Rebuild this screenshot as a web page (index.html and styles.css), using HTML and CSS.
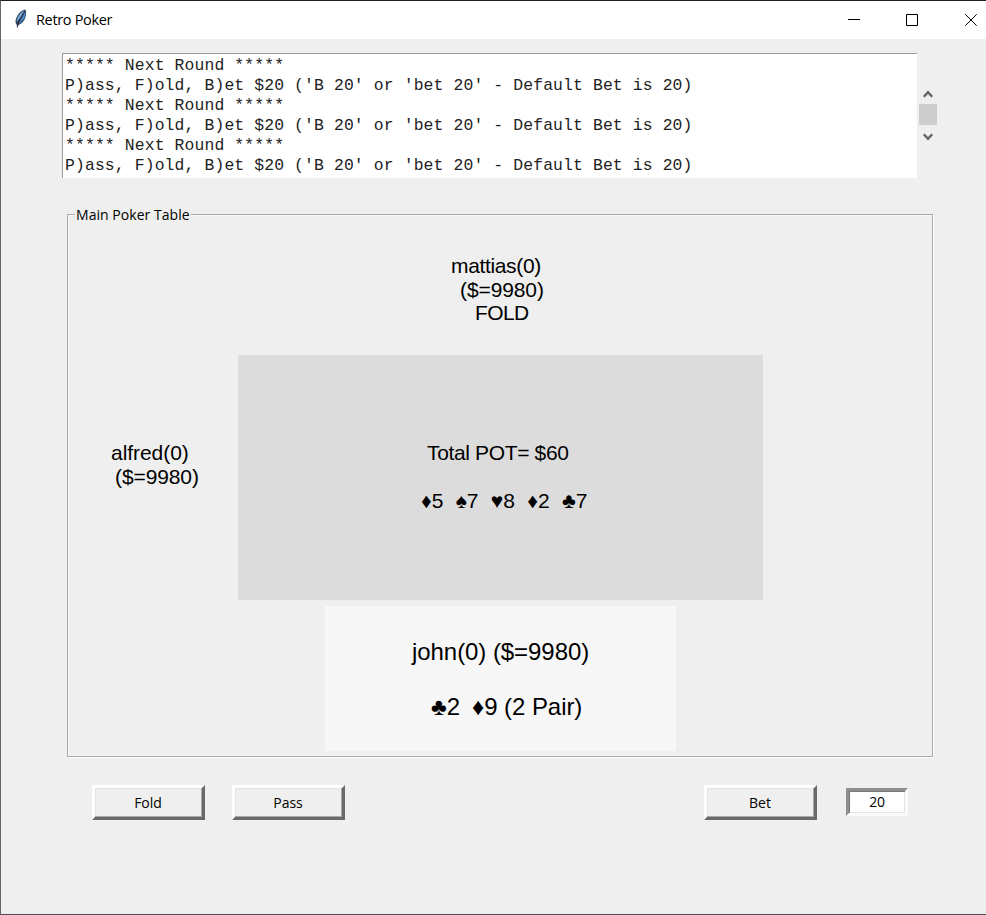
FILE: index.html
```html
<!DOCTYPE html>
<html lang="en">
<head>
<meta charset="utf-8">
<title>Retro Poker</title>
<link rel="stylesheet" href="styles.css">
</head>
<body>
<div class="window">
  <header class="titlebar">
    <svg class="feather" width="14" height="20" viewBox="0 0 14 20">
      <path d="M11.2 0.6C12.8 2.6 12.4 7.4 10.2 11.2C8.6 13.8 6.4 15.3 4.4 16L3.4 19L2.6 15.6C.8 13.6 1.4 9.6 4.2 5.6C6.2 2.7 9 .8 11.2.6Z" fill="#33475f"/>
      <path d="M10.2 1.6C7 3.2 3.2 7.6 2.6 12.6C5.4 10.6 8.4 6 10.2 1.6Z" fill="#7fb0e0"/>
      <path d="M11.2 2.6C12.2 7 9.4 12 5 14.8C6.8 11 9.4 7 11.2 2.6Z" fill="#4f8ad0"/>
      <path d="M10.4 2.6C7 7.4 4.2 12 3.2 18.6" stroke="#1c2836" stroke-width=".7" fill="none"/>
    </svg>
    <span class="title">Retro Poker</span>
    <div class="controls">
      <svg width="12" height="12" viewBox="0 0 12 12"><path d="M0 5.5H12"/></svg>
      <svg width="12" height="12" viewBox="0 0 12 12"><path d="M.5.5H11.5V11.5H.5Z"/></svg>
      <svg class="close" width="12" height="12" viewBox="0 0 12 12"><path d="M.3.3L11.7 11.7M11.7.3L.3 11.7"/></svg>
    </div>
  </header>

  <section class="log-row">
    <pre class="log">***** Next Round *****
P)ass, F)old, B)et $20 ('B 20' or 'bet 20' - Default Bet is 20)
***** Next Round *****
P)ass, F)old, B)et $20 ('B 20' or 'bet 20' - Default Bet is 20)
***** Next Round *****
P)ass, F)old, B)et $20 ('B 20' or 'bet 20' - Default Bet is 20)</pre>
    <div class="scrollbar">
      <svg width="10" height="8" viewBox="0 0 10 8"><path d="M.8 6.8L5 2.2L9.2 6.8"/></svg>
      <div class="thumb"></div>
      <svg width="10" height="8" viewBox="0 0 10 8"><path d="M.8 1.2L5 5.8L9.2 1.2"/></svg>
    </div>
  </section>

  <section class="table">
    <h2 class="legend"><span class="legend-text">Main Poker Table</span></h2>
    <div class="north">
      <div class="seat-name">mattias(0)</div>
      <div class="seat-cash">($=9980)</div>
      <div class="seat-state">FOLD</div>
    </div>
    <div class="middle">
      <div class="west">
        <div class="west-name">alfred(0)</div>
        <div class="west-cash">($=9980)</div>
      </div>
      <div class="pot">
        <div class="total">Total POT= $60</div>
        <div class="board"><span>♦5</span><span>♠7</span><span>♥8</span><span>♦2</span><span>♣7</span></div>
      </div>
    </div>
    <div class="south">
      <div class="south-name">john(0) ($=9980)</div>
      <div class="hand"><span>♣2</span><span>♦9 (2 Pair)</span></div>
    </div>
  </section>

  <footer class="actions">
    <button class="btn">Fold</button>
    <button class="btn">Pass</button>
    <button class="btn bet">Bet</button>
    <input class="amount" value="20" aria-label="Bet amount">
  </footer>
</div>
</body>
</html>
```
FILE: styles.css
```css
* { box-sizing: border-box; }
body { margin: 0; background: #efefef; color: #000; overflow: hidden; }

.window {
  width: 986px;
  height: 915px;
  background: #efefef;
  border-top: 1px solid #1a1c26;
  border-left: 1px solid #666;
  border-bottom: 1px solid #4a4f55;
  font: 14px/20px "Open Sans", "Noto Sans", sans-serif;
}

.titlebar {
  display: flex;
  align-items: center;
  height: 38px;
  padding: 0 9px 0 13px;
  background: #fff;
}
.feather { margin-right: 8px; margin-top: -3px; }
.title { font-size: 14.5px; letter-spacing: -0.33px; }
.controls { display: flex; gap: 46px; margin-left: auto; }
.controls svg { stroke: #000; stroke-width: 1; fill: none; }
.controls .close { margin-left: 1px; }

.log-row { display: flex; align-items: flex-start; padding: 14px 0 0 61px; }
.log {
  width: 855px;
  height: 125px;
  margin: 0;
  padding: 2px 0 0 2px;
  background: #fff;
  border-top: 1px solid #9c9c9c;
  border-left: 1px solid #9c9c9c;
  color: #222;
  font: 16.4px/20px "Liberation Mono", monospace;
  letter-spacing: 0.125px;
  overflow: hidden;
}
.scrollbar {
  display: flex;
  flex-direction: column;
  align-items: center;
  gap: 6px;
  width: 18px;
  margin: 37px 0 0 2px;
}
.scrollbar svg { stroke: #606060; stroke-width: 2.3; fill: none; }
.scrollbar svg:last-child { margin-top: 2px; }
.thumb { width: 18px; height: 21px; background: #cdcdcd; }

.table {
  width: 866px;
  height: 543px;
  margin: 36px 0 0 66px;
  border: 1px solid #a9a9a9;
  box-shadow: 1px 1px 0 #fff, inset 1px 1px 0 #fafafa;
  font: 21px/24px "Liberation Sans", Arial, sans-serif;
  letter-spacing: -0.35px;
}
.legend {
  width: max-content;
  height: 20px;
  margin: -10px 0 0 7px;
  padding: 0 1px;
  background: #efefef;
  font: 14px/20px "Open Sans", sans-serif;
}
.legend-text { letter-spacing: 0.04px; }
.north { width: 92px; height: 101px; margin: 29px 0 0 383px; white-space: nowrap; }
.seat-cash { padding-left: 9px; letter-spacing: -0.1px; }
.seat-state { padding-left: 24px; margin-top: -1px; letter-spacing: -0.6px; }
.middle { display: flex; height: 246px; }
.west { width: 170px; padding: 86px 0 0 43px; }
.west-name { letter-spacing: -0.05px; }
.west-cash { padding-left: 4px; letter-spacing: -0.1px; }
.pot { width: 525px; height: 245px; padding: 86px 0 0 183px; background: #dcdcdc; }
.total { padding-left: 6px; }
.board { display: flex; gap: 12.4px; margin-top: 24px; letter-spacing: -0.05px; }
.south {
  width: 351px;
  height: 145px;
  margin: 5px 0 0 257px;
  padding: 32px 0 0 87px;
  background: #f7f7f7;
  font-size: 24px;
  line-height: 28px;
  letter-spacing: -0.06px;
}
.hand { display: flex; gap: 12px; margin-top: 27px; padding-left: 19px; }

.actions { display: flex; align-items: center; margin: 28px 0 0 91px; }
.btn {
  width: 113px;
  height: 35px;
  margin-right: 27px;
  padding: 0 1px 0 0;
  background: #efefef;
  border: 3px solid;
  border-color: #fff #696969 #696969 #fff;
  box-shadow: inset -1px -1px 0 #a8a8a8, inset 1px 1px 0 #e3e3e3;
  color: #000;
  font: 14px/20px "Open Sans", sans-serif;
  letter-spacing: 0;
}
.bet { margin-left: 332px; margin-right: 29px; }
.amount {
  width: 62px;
  height: 28px;
  margin-bottom: 2px;
  padding: 0;
  border: 3px solid;
  border-color: #8f8f8f #fafafa #fafafa #8f8f8f;
  box-shadow: inset 1px 1px 0 #777, inset -1px -1px 0 #e3e3e3;
  background: #fff;
  text-align: center;
  font: 14px/20px "Open Sans", sans-serif;
  letter-spacing: -0.2px;
}
```
